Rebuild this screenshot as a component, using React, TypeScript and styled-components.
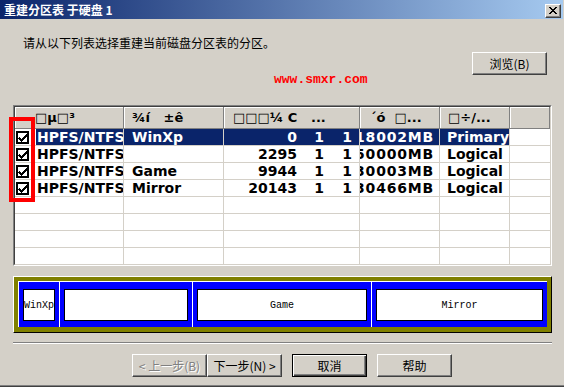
import React from "react";
import styled, { createGlobalStyle } from "styled-components";

const GlobalStyle = createGlobalStyle`
  html, body {
    margin: 0;
    padding: 0;
    background: #d4d0c8;
  }

  body {
    overflow: hidden;
  }
`;

const cjk = `"Noto Sans CJK SC", "Liberation Sans", sans-serif`;

const Window = styled.div`
  position: relative;
  display: flex;
  flex-direction: column;
  width: 564px;
  height: 387px;
  box-sizing: border-box;
  overflow: hidden;
  background: #d4d0c8;
  box-shadow: inset 0 -1px #404040, inset 0 -2px #808080;
  font-family: ${cjk};
  color: #000;
`;

const TitleBar = styled.div`
  display: flex;
  align-items: flex-start;
  justify-content: space-between;
  width: 563px;
  height: 19px;
  box-sizing: border-box;
  padding: 0 2px 0 4px;
  background: linear-gradient(to right, #0a246a, #a6caf0);
`;

const TitleText = styled.span`
  color: #fff;
  font-size: 12px;
  font-weight: 700;
  line-height: 20px;
  white-space: pre;
`;

const CloseButton = styled.div`
  display: flex;
  width: 16px;
  height: 14px;
  margin-top: 4px;
  box-sizing: border-box;
  padding: 2px 0 0 3px;
  background: #d4d0c8;
  border: 1px solid;
  border-color: #fff #404040 #404040 #fff;
  box-shadow: inset -1px -1px #808080;
`;

const Instruction = styled.p`
  margin: 17px 0 0 23px;
  font-size: 12px;
  line-height: 14px;
`;

const BrowseRow = styled.div`
  display: flex;
  justify-content: flex-end;
  margin-top: 2px;
  padding-right: 17px;
`;

const Button = styled.div<{ $default?: boolean; $disabled?: boolean }>`
  display: flex;
  align-items: center;
  justify-content: center;
  width: 75px;
  height: 23px;
  box-sizing: border-box;
  background: #d4d0c8;
  border: 1px solid;
  border-color: ${(p) => (p.$default ? "#000" : "#fff #404040 #404040 #fff")};
  box-shadow: ${(p) =>
    p.$default
      ? "inset 1px 1px #fff, inset -1px -1px #404040, inset -2px -2px #808080"
      : "inset -1px -1px #808080"};
  font-size: 12px;
  line-height: 14px;
  white-space: pre;
  color: ${(p) => (p.$disabled ? "#808080" : "#000")};
  text-shadow: ${(p) => (p.$disabled ? "1px 1px #fff" : "none")};
`;

const Url = styled.div`
  margin: -2px 0 0 274px;
  color: #ff0000;
  font-family: "Liberation Mono", monospace;
  font-size: 13px;
  font-weight: 700;
  line-height: 14px;
`;

const ListFrame = styled.div`
  height: 161px;
  margin: 18px 12px 0 13px;
  box-sizing: border-box;
  border: 1px solid;
  border-color: #808080 #fff #fff #808080;
`;

const ListInner = styled.div`
  height: 100%;
  box-sizing: border-box;
  overflow: hidden;
  background: #fff;
  border: 1px solid;
  border-color: #404040 #d4d0c8 #d4d0c8 #404040;
  font-family: "DejaVu Sans", sans-serif;
  font-weight: 700;
`;

const HeaderRow = styled.div`
  display: flex;
  height: 22px;
`;

const HeadCell = styled.div<{ $width?: number; $indent: number }>`
  flex: ${(p) => (p.$width ? `0 0 ${p.$width}px` : "1")};
  box-sizing: border-box;
  padding-left: ${(p) => p.$indent}px;
  overflow: hidden;
  background: #d4d0c8;
  border-right: 1px solid #808080;
  border-bottom: 1px solid #808080;
  box-shadow: inset 1px 1px #fff;
  font-size: 13px;
  line-height: 21px;
  white-space: pre;
`;

const Row = styled.div`
  display: flex;
  height: 17px;
  box-sizing: border-box;
  border-bottom: 1px solid #d4d0c8;
  font-size: 14px;
  line-height: 16px;
`;

const Cell = styled.div<{
  $width?: number;
  $selected?: boolean;
  $align?: "start" | "end";
  $pad?: string;
  $grid?: boolean;
  $spacing?: number;
}>`
  display: flex;
  justify-content: ${(p) => (p.$align === "end" ? "flex-end" : "flex-start")};
  align-items: center;
  flex: ${(p) => (p.$width ? `0 0 ${p.$width}px` : "1")};
  box-sizing: border-box;
  padding: ${(p) => p.$pad ?? "0"};
  overflow: hidden;
  white-space: pre;
  letter-spacing: ${(p) => p.$spacing ?? 0}px;
  border-right: ${(p) => (p.$grid === false ? "none" : "1px solid #d4d0c8")};
  background: ${(p) => (p.$selected ? "#0a246a" : "transparent")};
  color: ${(p) => (p.$selected ? "#fff" : "#000")};

  & > span {
    flex-shrink: 0;
  }
`;

const CheckWrap = styled.div`
  display: flex;
  flex: 0 0 auto;
  margin: 0 7px 0 1px;
`;

const FsName = styled.div<{ $selected?: boolean }>`
  flex: 1;
  height: 16px;
  padding-left: 1px;
  overflow: hidden;
  white-space: pre;
  background: ${(p) => (p.$selected ? "#0a246a" : "transparent")};
  color: ${(p) => (p.$selected ? "#fff" : "#000")};
`;

const Span3 = styled.div`
  display: flex;
  flex: 0 0 136px;
  box-sizing: border-box;
  border-right: 1px solid #d4d0c8;
`;

const DiskMap = styled.div`
  display: flex;
  height: 57px;
  margin: 10px 12px 0 13px;
  box-sizing: border-box;
  padding: 4px 5px 5px 4px;
  background: #808000;
  border: 1px solid;
  border-color: #fff #000 #000 #fff;
`;

const Partition = styled.div<{ $width: number }>`
  display: flex;
  flex: 0 0 ${(p) => p.$width}px;
  box-sizing: border-box;
  padding: 7px 4px 6px 4px;
  background: #0000ff;
  border-top: 1px solid #fff;
  border-left: 1px solid #fff;
`;

const PartitionLabel = styled.div`
  display: flex;
  flex: 1;
  align-items: center;
  justify-content: center;
  overflow: hidden;
  background: #fff;
  border: 1px solid #000;
  font-family: "Liberation Mono", monospace;
  font-size: 10px;
  white-space: pre;

  & > span {
    flex-shrink: 0;
  }
`;

const Separator = styled.div`
  margin: 9px 12px 0 13px;
  border-top: 1px solid #808080;
  border-bottom: 1px solid #fff;
`;

const ButtonRow = styled.div`
  display: flex;
  gap: 10px;
  margin-top: 10px;
  padding-left: 132px;
`;

const WizardPair = styled.div`
  display: flex;
`;

const Annotation = styled.div`
  position: absolute;
  left: 9px;
  top: 117px;
  width: 26px;
  height: 85px;
  box-sizing: border-box;
  border: 4px solid #ff0000;
`;

const xPixels = [
  [0, 1, 6, 7],
  [1, 2, 5, 6],
  [2, 3, 4, 5],
  [3, 4],
  [2, 3, 4, 5],
  [1, 2, 5, 6],
  [0, 1, 6, 7],
];

const CloseGlyph = () => (
  <svg width="8" height="7" viewBox="0 0 8 7" shapeRendering="crispEdges">
    {xPixels.map((cols, y) =>
      cols.map((x) => <rect key={`${x}-${y}`} x={x} y={y} width="1" height="1" fill="#000" />)
    )}
  </svg>
);

const CheckBox = () => (
  <svg width="13" height="13" viewBox="0 0 13 13" shapeRendering="crispEdges">
    <rect x="0" y="0" width="13" height="13" fill="#000" />
    <rect x="2" y="2" width="9" height="9" fill="#fff" />
    <path d="M3 6h1v1h1v1h1v-1h1v-1h1v-1h1v-1h1v-1h1v3h-1v1h-1v1h-1v1h-1v1h-1v1h-1v-1h-1v-1h-1v-1h-1z" fill="#000" />
  </svg>
);

const columns = [
  { title: "□µ□³", width: 109, indent: 20 },
  { title: "¾í   ±ê", width: 100, indent: 8 },
  { title: "□□□¼ C   ...", width: 136, indent: 9 },
  { title: "´ó  □...", width: 80, indent: 10 },
  { title: "□÷/...", width: 70, indent: 8 },
];

const rows = [
  { fs: "HPFS/NTFS", label: "WinXp", start: "0", head: "1", sector: "1", size: "18002MB", type: "Primary", selected: true },
  { fs: "HPFS/NTFS", label: "", start: "2295", head: "1", sector: "1", size: "50000MB", type: "Logical" },
  { fs: "HPFS/NTFS", label: "Game", start: "9944", head: "1", sector: "1", size: "30003MB", type: "Logical" },
  { fs: "HPFS/NTFS", label: "Mirror", start: "20143", head: "1", sector: "1", size: "30466MB", type: "Logical" },
];

const partitions = [
  { label: "WinXp", width: 40 },
  { label: "", width: 133 },
  { label: "Game", width: 179 },
  { label: "Mirror", width: 176 },
];

const App = () => (
  <Window>
    <GlobalStyle />
    <TitleBar>
      <TitleText>重建分区表 于硬盘 1</TitleText>
      <CloseButton>
        <CloseGlyph />
      </CloseButton>
    </TitleBar>

    <Instruction>请从以下列表选择重建当前磁盘分区表的分区。</Instruction>
    <BrowseRow>
      <Button>浏览(B)</Button>
    </BrowseRow>
    <Url>www.smxr.com</Url>

    <ListFrame>
      <ListInner>
        <HeaderRow>
          {columns.map((col) => (
            <HeadCell key={col.title} $width={col.width} $indent={col.indent}>
              {col.title}
            </HeadCell>
          ))}
          <HeadCell $indent={0} />
        </HeaderRow>
        {rows.map((row, i) => (
          <Row key={i}>
            <Cell $width={109}>
              <CheckWrap>
                <CheckBox />
              </CheckWrap>
              <FsName $selected={row.selected}>{row.fs}</FsName>
            </Cell>
            <Cell $width={100} $pad="0 0 0 8px" $selected={row.selected}>
              {row.label}
            </Cell>
            <Span3>
              <Cell $width={76} $align="end" $pad="0 3px 0 0" $grid={false} $selected={row.selected}>
                <span>{row.start}</span>
              </Cell>
              <Cell $width={27} $align="end" $pad="0 3px 0 0" $grid={false} $selected={row.selected}>
                <span>{row.head}</span>
              </Cell>
              <Cell $align="end" $pad="0 7px 0 0" $grid={false} $selected={row.selected}>
                <span>{row.sector}</span>
              </Cell>
            </Span3>
            <Cell $width={80} $align="end" $pad="0 5px 0 0" $spacing={0.8} $selected={row.selected}>
              <span>{row.size}</span>
            </Cell>
            <Cell $width={70} $pad="0 0 0 7px" $selected={row.selected}>
              {row.type}
            </Cell>
            <Cell $grid={false} />
          </Row>
        ))}
        {[0, 1, 2, 3].map((i) => (
          <Row key={`empty-${i}`}>
            <Cell $width={109} />
            <Cell $width={100} />
            <Cell $width={136} />
            <Cell $width={80} />
            <Cell $width={70} />
            <Cell $grid={false} />
          </Row>
        ))}
      </ListInner>
    </ListFrame>

    <DiskMap>
      {partitions.map((part, i) => (
        <Partition key={i} $width={part.width}>
          <PartitionLabel>
            <span>{part.label}</span>
          </PartitionLabel>
        </Partition>
      ))}
    </DiskMap>

    <Separator />

    <ButtonRow>
      <WizardPair>
        <Button $disabled>{"< 上一步(B)"}</Button>
        <Button>{"下一步(N) >"}</Button>
      </WizardPair>
      <Button $default>取消</Button>
      <Button>帮助</Button>
    </ButtonRow>

    <Annotation />
  </Window>
);

export default App;
